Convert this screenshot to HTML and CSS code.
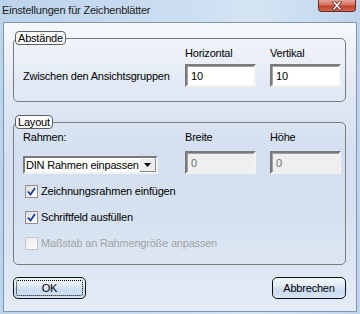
FILE: index.html
```html
<!DOCTYPE html>
<html lang="de">
  <head>
    <meta charset="UTF-8" />
    <title>Einstellungen für Zeichenblätter</title>
    <link rel="stylesheet" href="styles.css">
  </head>
  <body>
    <div class="window">
      <div class="titlebar">
        <span class="title">Einstellungen für Zeichenblätter</span>
        <span class="close-btn">
          <svg width="14" height="10" viewBox="0 0 14 10">
            <path d="M4 1 L10 8 M10 1 L4 8" stroke="#5a2a24" stroke-width="3.2" stroke-linecap="round" />
            <path d="M4 1 L10 8 M10 1 L4 8" stroke="#ffffff" stroke-width="1.6" stroke-linecap="round" />
          </svg>
        </span>
      </div>
      <div class="client">
        <fieldset class="group">
          <legend>Abstände</legend>
          <div class="group-body grid-distances">
            <span></span>
            <span class="label">Horizontal</span>
            <span class="label">Vertikal</span>
            <span class="label">Zwischen den Ansichtsgruppen</span>
            <input class="field" type="text" value="10" />
            <input class="field" type="text" value="10" />
          </div>
        </fieldset>

        <fieldset class="group group-layout">
          <legend>Layout</legend>
          <div class="group-body">
            <div class="grid-layout">
              <span class="label">Rahmen:</span>
              <span class="label">Breite</span>
              <span class="label">Höhe</span>
              <div class="combo">
                <span class="combo-text">DIN Rahmen einpassen</span>
                <span class="combo-btn">
                  <svg width="7" height="4" viewBox="0 0 7 4"><path d="M0 0 H7 L3.5 4 Z" fill="#000" /></svg>
                </span>
              </div>
              <input class="field" type="text" value="0" disabled />
              <input class="field" type="text" value="0" disabled />
            </div>
            <div class="checks">
              <label class="check">
                <span class="box checked">
                  <svg width="9" height="9" viewBox="0 0 9 9"><path d="M1 4.5 L3.5 7.5 L8 1" fill="none" stroke="#1d3c9a" stroke-width="1.8" /></svg>
                </span>
                Zeichnungsrahmen einfügen
              </label>
              <label class="check">
                <span class="box checked">
                  <svg width="9" height="9" viewBox="0 0 9 9"><path d="M1 4.5 L3.5 7.5 L8 1" fill="none" stroke="#1d3c9a" stroke-width="1.8" /></svg>
                </span>
                Schriftfeld ausfüllen
              </label>
              <label class="check disabled">
                <span class="box"></span>
                Maßstab an Rahmengröße anpassen
              </label>
            </div>
          </div>
        </fieldset>

        <div class="buttons">
          <button class="btn btn-default" type="submit">OK</button>
          <button class="btn" type="button">Abbrechen</button>
        </div>
      </div>
    </div>
  </body>
</html>
```

FILE: styles.css
```css
body {
  margin: 0;
  font-family: "Liberation Sans", Arial, sans-serif;
  font-size: 11px;
  letter-spacing: -0.2px;
  color: #000;
}
.window {
  width: 360px;
  height: 314px;
  display: flex;
  flex-direction: column;
  background: linear-gradient(to right, #bcd3ec, #cddff2 55%, #d6e5f5 70%, #bfd4ec);
}
.titlebar {
  height: 22px;
  display: flex;
  justify-content: space-between;
  align-items: flex-start;
  padding-left: 2px;
}
.title {
  line-height: 20px;
  font-size: 11px;
  color: #1b1b1b;
}
.close-btn {
  width: 36px;
  height: 11px;
  margin-right: 4px;
  border: 1px solid #6e2b22;
  border-top: none;
  border-radius: 0 0 4px 4px;
  background: linear-gradient(#e6a597, #d66f5c 45%, #c2412c 55%, #d2684f);
  display: flex;
  justify-content: center;
  align-items: center;
}
.client {
  margin: 0 3px 2px 3px;
  flex: 1;
  border: 1px solid #8196b0;
  background: linear-gradient(#f6f8fc, #e3eaf5 20%, #d4e0f0 45%, #d5e1f0 65%, #e4ebf5 100%);
  padding-top: 8px;
  display: flex;
  flex-direction: column;
}
.group {
  margin: 0 10px 0 9px;
  padding: 0;
  border: 1px solid #7c7c7c;
  border-radius: 5px;
  min-width: 0;
}
.group legend {
  margin-left: 1px;
  padding: 0 2px;
  line-height: 12px;
  border: 1px solid #5e5e5e;
  border-radius: 4px;
  background: #fbfcfe;
}
.group-layout {
  margin-top: 13px;
}
.group-body {
  padding: 1px 4px 14px 9px;
}
.label {
  line-height: 14px;
  white-space: nowrap;
}
.grid-distances {
  display: grid;
  grid-template-columns: 148px 71px 71px;
  column-gap: 14px;
  row-gap: 4px;
  align-items: center;
}
.grid-distances .label:first-of-type {
  align-self: end;
}
.grid-layout {
  display: grid;
  grid-template-columns: 148px 71px 71px;
  column-gap: 14px;
  row-gap: 7px;
  align-items: end;
}
.field {
  width: 71px;
  height: 23px;
  box-sizing: border-box;
  margin: 0;
  padding: 0 4px;
  font-family: inherit;
  font-size: 11px;
  letter-spacing: inherit;
  color: #000;
  background: #fff;
  border: 2px solid;
  border-color: #7a7a7a #f2f2f2 #f2f2f2 #7a7a7a;
  box-shadow: inset 1px 1px 0 #a0a0a0;
}
.field:disabled {
  background: #efefef;
  color: #707070;
}
.combo {
  width: 135px;
  height: 18px;
  box-sizing: border-box;
  display: flex;
  align-items: center;
  background: #fff;
  border: 2px solid;
  border-color: #7a7a7a #f2f2f2 #f2f2f2 #7a7a7a;
  overflow: hidden;
}
.combo-text {
  flex: 1;
  padding-left: 1px;
  white-space: nowrap;
  overflow: hidden;
}
.combo-btn {
  width: 17px;
  height: 14px;
  box-sizing: border-box;
  display: flex;
  justify-content: center;
  align-items: center;
  background: #ececec;
  border: 1px solid;
  border-color: #ffffff #8a8a8a #8a8a8a #ffffff;
}
.checks {
  margin-top: 10px;
  padding-left: 2px;
  display: flex;
  flex-direction: column;
  gap: 12px;
  padding-bottom: 0;
}
.check {
  display: flex;
  align-items: center;
  gap: 3px;
  line-height: 14px;
  height: 14px;
}
.box {
  width: 13px;
  height: 13px;
  box-sizing: border-box;
  border: 1px solid #8f8f8f;
  background: linear-gradient(135deg, #d8d8d8, #f7f7f7 70%, #ffffff);
  display: flex;
  justify-content: center;
  align-items: center;
}
.check.disabled {
  color: #a3a3a3;
}
.check.disabled .box {
  border-color: #c6c6c6;
  background: linear-gradient(135deg, #ececec, #fafafa);
}
.buttons {
  margin: 12px 10px 0 9px;
  display: flex;
  justify-content: space-between;
}
.btn {
  height: 22px;
  width: 74px;
  margin: 0;
  padding: 0;
  font-family: inherit;
  font-size: 11px;
  letter-spacing: inherit;
  color: #000;
  border: 1px solid #111;
  border-radius: 5px;
  background: linear-gradient(#f2f6fb, #e1eaf6 40%, #c9dbf0 60%, #d5e3f4);
}
.btn-default {
  width: 73px;
  outline: 1px dotted #000;
  outline-offset: -4px;
}
```
